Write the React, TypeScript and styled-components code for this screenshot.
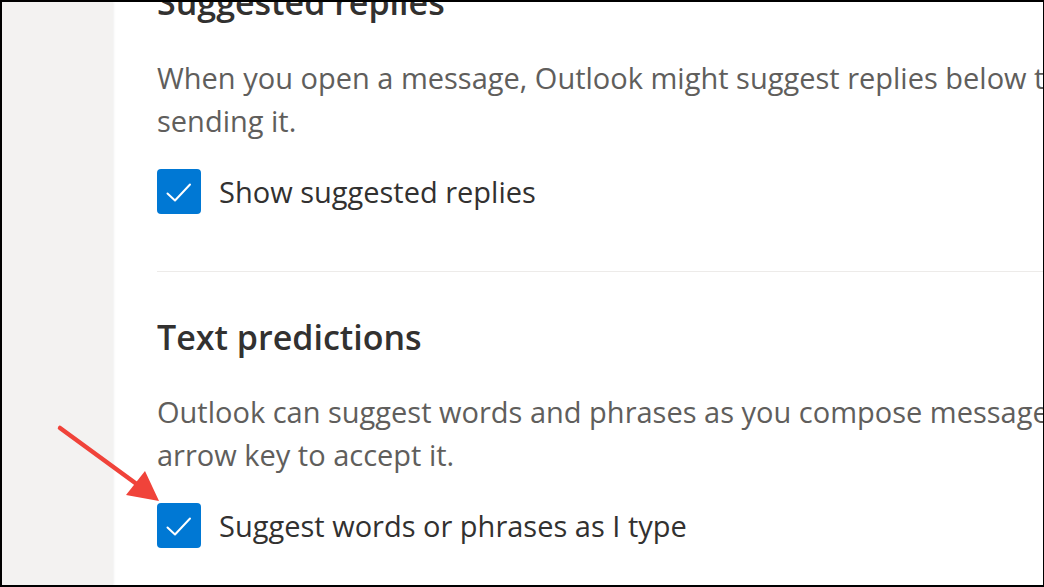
import React from 'react';
import styled, { createGlobalStyle } from 'styled-components';

const GlobalStyle = createGlobalStyle`
  html, body {
    margin: 0;
    padding: 0;
    background: #000;
  }
  body {
    font-family: 'Open Sans', 'Noto Sans', sans-serif;
  }
`;

const Frame = styled.div`
  position: relative;
  box-sizing: border-box;
  width: 1044px;
  height: 587px;
  border: 2px solid #000;
  border-right-width: 1px;
  display: flex;
  overflow: hidden;
  background: #fff;
`;

const Sidebar = styled.aside`
  width: 111px;
  flex-shrink: 0;
  background: #f3f2f1;
  box-shadow: 1px 0 2px rgba(0, 0, 0, 0.06);
  z-index: 1;
`;

const Main = styled.main`
  flex: 1;
  min-width: 0;
  overflow: hidden;
  padding-left: 44px;
`;

const Content = styled.div`
  margin-top: -24px;
  display: flex;
  flex-direction: column;
`;

const Section = styled.section`
  display: flex;
  flex-direction: column;
`;

const Heading = styled.h2<{ $gap: number }>`
  margin: 0 0 ${p => p.$gap}px;
  font-size: 34px;
  line-height: 48px;
  font-weight: 600;
  color: #323130;
  white-space: nowrap;
`;

const Description = styled.p`
  margin: 0 0 27px;
  font-size: 29px;
  line-height: 43px;
  color: #605e5c;
`;

const Line = styled.span`
  display: block;
  white-space: nowrap;
`;

const CheckRow = styled.label`
  display: flex;
  align-items: center;
  gap: 18px;
  height: 45px;
  cursor: pointer;
`;

const Box = styled.span`
  width: 44px;
  height: 45px;
  border-radius: 4px;
  background: #0078d4;
  display: flex;
  align-items: center;
  justify-content: center;
  flex-shrink: 0;
`;

const Label = styled.span`
  font-size: 29px;
  color: #323130;
  white-space: nowrap;
`;

const Divider = styled.hr`
  border: none;
  border-top: 1px solid #edebe9;
  margin: 57px 0 41px;
`;

const Annotation = styled.svg`
  position: absolute;
  left: -2px;
  top: -2px;
  width: 1044px;
  height: 587px;
  pointer-events: none;
  z-index: 2;
`;

const Check: React.FC<{ label: string }> = ({ label }) => (
  <CheckRow>
    <Box>
      <svg width="44" height="45" viewBox="0 0 44 45">
        <path d="M10.5 24.5 L18 31.5 L33 15.5" fill="none" stroke="#fff" strokeWidth="2" strokeLinecap="round" strokeLinejoin="round" />
      </svg>
    </Box>
    <Label>{label}</Label>
  </CheckRow>
);

export default function App() {
  return (
    <>
      <GlobalStyle />
      <Frame>
        <Sidebar />
        <Main>
          <Content>
            <Section>
              <Heading $gap={30}>Suggested replies</Heading>
              <Description>
                <Line>When you open a message, Outlook might suggest replies below the message. You can use one to respond before</Line>
                <Line>sending it.</Line>
              </Description>
              <Check label="Show suggested replies" />
            </Section>
            <Divider />
            <Section>
              <Heading $gap={29}>Text predictions</Heading>
              <Description>
                <Line>Outlook can suggest words and phrases as you compose messages. Press the Tab key or the right</Line>
                <Line>arrow key to accept it.</Line>
              </Description>
              <Check label="Suggest words or phrases as I type" />
            </Section>
          </Content>
        </Main>
        <Annotation viewBox="0 0 1044 587">
          <line x1="60" y1="428" x2="138" y2="485" stroke="#f0433a" strokeWidth="4.5" strokeLinecap="round" />
          <polygon points="159,501 126,495 145,471" fill="#f0433a" />
        </Annotation>
      </Frame>
    </>
  );
}
